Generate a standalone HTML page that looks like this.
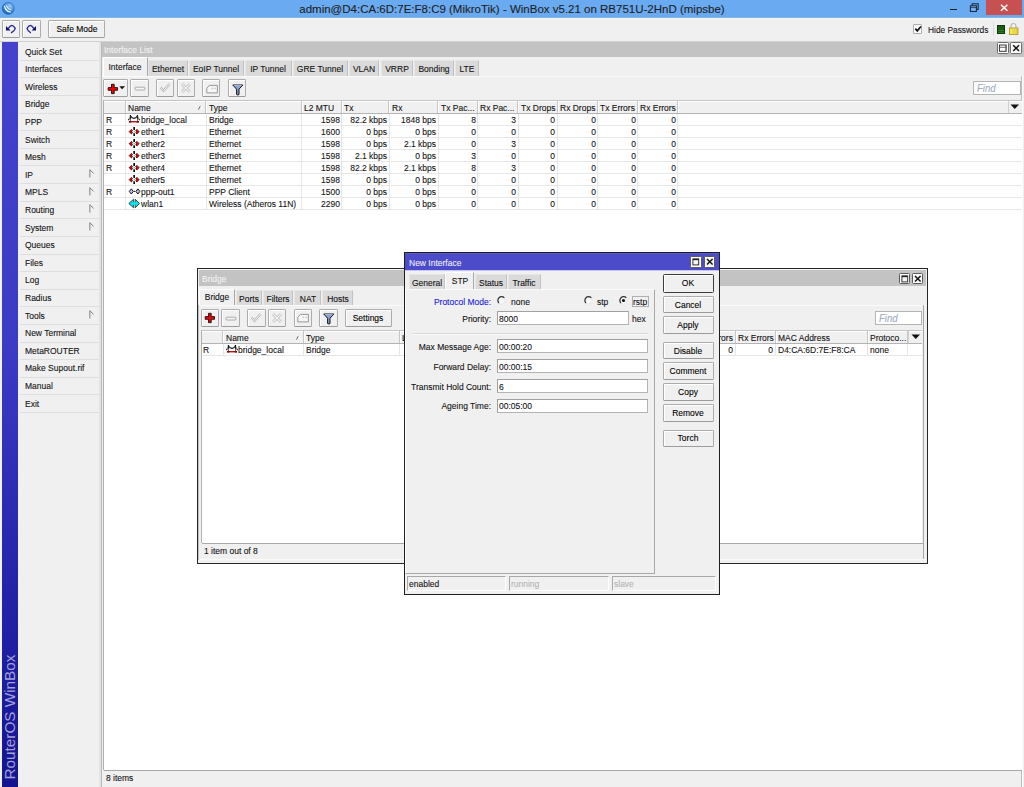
<!DOCTYPE html><html><head><meta charset="utf-8"><style>
*{margin:0;padding:0}
html,body{width:1024px;height:787px;overflow:hidden;background:#f0f0f0;position:relative;font-family:"Liberation Sans",sans-serif;}
div{position:absolute;box-sizing:border-box}
.t{height:20px;line-height:20px;white-space:nowrap;font-size:8.5px;-webkit-text-stroke:0.1px currentColor}
svg{position:absolute;overflow:visible}
</style></head><body>
<div style="left:0.00px;top:0.00px;width:1024.00px;height:17.00px;background:#6aaaf0"></div>
<div style="left:0.00px;top:17.00px;width:1024.00px;height:1.00px;background:#7fb4ea"></div>
<div style="left:0.00px;top:18.00px;width:1024.00px;height:1.00px;background:#f6f6f6"></div>
<svg style="left:0px;top:0px" width="18" height="18"><defs><radialGradient id="lg" cx="62%" cy="30%" r="75%"><stop offset="0" stop-color="#9ccaf8"/><stop offset="0.45" stop-color="#5a9ce8"/><stop offset="1" stop-color="#0a56b4"/></radialGradient></defs>
<circle cx="8.24" cy="8.47" r="5.9" fill="url(#lg)" stroke="#2c6cbc" stroke-width="0.9"/>
<path d="M4.4 5.9 Q5.4 11.4 10.8 12.3" stroke="#fff" stroke-width="1.1" fill="none"/>
<path d="M6.3 5.4 Q7.4 9.4 11.3 9.8" stroke="#f4f8ff" stroke-width="0.9" fill="none"/>
</svg>
<div class="t" style="left:212.00px;top:-1.00px;width:600px;text-align:center;font-size:11.50px;color:#1e1e1e;transform:scaleX(1.0000);transform-origin:50% 50%;">admin@D4:CA:6D:7E:F8:C9 (MikroTik) - WinBox v5.21 on RB751U-2HnD (mipsbe)</div>
<div style="left:950.20px;top:8.80px;width:6.80px;height:1.30px;background:#1a1a1a"></div>
<svg style="left:968px;top:2px" width="14" height="12"><rect x="4.2" y="1.8" width="6" height="5.6" fill="none" stroke="#1a2a40" stroke-width="1.1"/><rect x="2.4" y="3.8" width="6" height="5.6" fill="#7ab8f4" stroke="#1a2a40" stroke-width="1.1"/><path d="M2.6 5.6 H8.2" stroke="#1a2a40" stroke-width="0.8"/></svg>
<div style="left:986.00px;top:0.00px;width:35.50px;height:15.00px;background:#c75050"></div>
<svg style="left:998px;top:2px" width="12" height="12"><path d="M3 2.8 L9.4 8.8 M9.4 2.8 L3 8.8" stroke="#fff" stroke-width="1.5"/></svg>
<div style="left:1.50px;top:20.30px;width:18.20px;height:17.70px;border:1px solid #acacac;border-bottom-color:#9c9c9c;border-radius:1.5px;background:#f0f0f0;box-shadow:inset 1px 1px 0 #fff;box-sizing:border-box;"></div>
<svg style="left:1px;top:20px" width="20" height="18"><path d="M7.6 8.2 Q9.4 5.3 10.9 5.3 Q12.6 5.5 14.3 8.4 Q13.8 10.6 10.4 12.6" stroke="#202090" stroke-width="1.25" fill="none" stroke-linejoin="round" stroke-linecap="round"/><path d="M5 6 L5 10.6 L9.6 10.6 Z" fill="#101070"/></svg>
<div style="left:22.20px;top:20.30px;width:18.50px;height:17.70px;border:1px solid #acacac;border-bottom-color:#9c9c9c;border-radius:1.5px;background:#f0f0f0;box-shadow:inset 1px 1px 0 #fff;box-sizing:border-box;"></div>
<svg style="left:22px;top:20px" width="20" height="18"><path d="M11.6 8.2 Q9.8 5.3 8.3 5.3 Q6.6 5.5 5 8.6 Q5.6 10.4 8.4 12.6" stroke="#202090" stroke-width="1.25" fill="none" stroke-linejoin="round" stroke-linecap="round"/><path d="M14 6 L14 10.6 L9.6 10.6 Z" fill="#101070"/></svg>
<div style="left:48.30px;top:20.30px;width:56.50px;height:17.70px;border:1px solid #acacac;border-bottom-color:#9c9c9c;border-radius:1.5px;background:#f0f0f0;box-shadow:inset 1px 1px 0 #fff;box-sizing:border-box;"></div>
<div class="t" style="left:-223.45px;top:19.15px;width:600px;text-align:center;font-size:9.44px;color:#000;transform:scaleX(0.9009);transform-origin:50% 50%;">Safe Mode</div>
<div style="left:913.00px;top:24.00px;width:9.30px;height:9.80px;border:1px solid #acacac;border-radius:1px;background:#fff"></div>
<svg style="left:913px;top:24px" width="10" height="10"><path d="M2.3 4.6 L4.3 6.9 L7.9 2.5" stroke="#111" stroke-width="1.7" fill="none"/></svg>
<div class="t" style="left:927.50px;top:19.90px;font-size:9.27px;color:#111;transform:scaleX(0.9009);transform-origin:0 50%;">Hide Passwords</div>
<div style="left:993.00px;top:22.00px;width:1.00px;height:14.00px;background:#dcdcdc"></div>
<div style="left:996.90px;top:24.70px;width:7.90px;height:9.40px;background:repeating-linear-gradient(#1c5c12 0 1.6px,#2e7a20 1.6px 2.3px);border:0.8px solid #0a3a0a"></div>
<svg style="left:1008px;top:22px" width="12" height="14"><path d="M3 6 V4.5 Q3 1.5 5.5 1.5 Q8 1.5 8 4.5 V6" stroke="#b8b8b8" stroke-width="1.2" fill="none"/><rect x="1.5" y="6" width="8.5" height="6.5" fill="#f6ea5a" stroke="#a89020" stroke-width="0.8"/><path d="M5 7 V11.8 M7 7 V11.8 M8.6 7 V11.8" stroke="#d8b830" stroke-width="0.7"/></svg>
<div style="left:0.00px;top:40.90px;width:1024.00px;height:1.00px;background:#d2d2d2"></div>
<div style="left:2.00px;top:42.00px;width:15.50px;height:745.00px;background:linear-gradient(#4343cc,#3b3bc4 40%,#1c1ca0 85%,#141490)"></div>
<div class="t" style="left:10px;top:716.8px;width:0;height:0;"><div style="left:0;top:0;transform:translate(-50%,-50%) rotate(-90deg);font-size:15.3px;color:#a2a2d2;-webkit-text-stroke:0;white-space:nowrap;line-height:16px;height:16px;">RouterOS WinBox</div></div>
<div class="t" style="left:25.00px;top:41.50px;font-size:9.44px;color:#111;transform:scaleX(0.9009);transform-origin:0 50%;">Quick Set</div>
<div style="left:19.50px;top:59.81px;width:79.50px;height:1.00px;background:#dedede"></div>
<div class="t" style="left:25.00px;top:59.11px;font-size:9.44px;color:#111;transform:scaleX(0.9009);transform-origin:0 50%;">Interfaces</div>
<div style="left:19.50px;top:77.42px;width:79.50px;height:1.00px;background:#dedede"></div>
<div class="t" style="left:25.00px;top:76.73px;font-size:9.44px;color:#111;transform:scaleX(0.9009);transform-origin:0 50%;">Wireless</div>
<div style="left:19.50px;top:95.03px;width:79.50px;height:1.00px;background:#dedede"></div>
<div class="t" style="left:25.00px;top:94.33px;font-size:9.44px;color:#111;transform:scaleX(0.9009);transform-origin:0 50%;">Bridge</div>
<div style="left:19.50px;top:112.64px;width:79.50px;height:1.00px;background:#dedede"></div>
<div class="t" style="left:25.00px;top:111.95px;font-size:9.44px;color:#111;transform:scaleX(0.9009);transform-origin:0 50%;">PPP</div>
<div style="left:19.50px;top:130.25px;width:79.50px;height:1.00px;background:#dedede"></div>
<div class="t" style="left:25.00px;top:129.56px;font-size:9.44px;color:#111;transform:scaleX(0.9009);transform-origin:0 50%;">Switch</div>
<div style="left:19.50px;top:147.86px;width:79.50px;height:1.00px;background:#dedede"></div>
<div class="t" style="left:25.00px;top:147.17px;font-size:9.44px;color:#111;transform:scaleX(0.9009);transform-origin:0 50%;">Mesh</div>
<div style="left:19.50px;top:165.47px;width:79.50px;height:1.00px;background:#dedede"></div>
<div class="t" style="left:25.00px;top:164.78px;font-size:9.44px;color:#111;transform:scaleX(0.9009);transform-origin:0 50%;">IP</div>
<div style="left:19.50px;top:183.08px;width:79.50px;height:1.00px;background:#dedede"></div>
<svg style="left:88px;top:169.17px" width="8" height="10"><path d="M1.8 0.4 V8.5" stroke="#9a9a9a" stroke-width="1.3"/><path d="M1.9 0.9 L5.6 4.3" stroke="#808080" stroke-width="1"/></svg>
<div class="t" style="left:25.00px;top:182.39px;font-size:9.44px;color:#111;transform:scaleX(0.9009);transform-origin:0 50%;">MPLS</div>
<div style="left:19.50px;top:200.69px;width:79.50px;height:1.00px;background:#dedede"></div>
<svg style="left:88px;top:186.78px" width="8" height="10"><path d="M1.8 0.4 V8.5" stroke="#9a9a9a" stroke-width="1.3"/><path d="M1.9 0.9 L5.6 4.3" stroke="#808080" stroke-width="1"/></svg>
<div class="t" style="left:25.00px;top:200.00px;font-size:9.44px;color:#111;transform:scaleX(0.9009);transform-origin:0 50%;">Routing</div>
<div style="left:19.50px;top:218.30px;width:79.50px;height:1.00px;background:#dedede"></div>
<svg style="left:88px;top:204.39px" width="8" height="10"><path d="M1.8 0.4 V8.5" stroke="#9a9a9a" stroke-width="1.3"/><path d="M1.9 0.9 L5.6 4.3" stroke="#808080" stroke-width="1"/></svg>
<div class="t" style="left:25.00px;top:217.61px;font-size:9.44px;color:#111;transform:scaleX(0.9009);transform-origin:0 50%;">System</div>
<div style="left:19.50px;top:235.91px;width:79.50px;height:1.00px;background:#dedede"></div>
<svg style="left:88px;top:222.00px" width="8" height="10"><path d="M1.8 0.4 V8.5" stroke="#9a9a9a" stroke-width="1.3"/><path d="M1.9 0.9 L5.6 4.3" stroke="#808080" stroke-width="1"/></svg>
<div class="t" style="left:25.00px;top:235.22px;font-size:9.44px;color:#111;transform:scaleX(0.9009);transform-origin:0 50%;">Queues</div>
<div style="left:19.50px;top:253.52px;width:79.50px;height:1.00px;background:#dedede"></div>
<div class="t" style="left:25.00px;top:252.82px;font-size:9.44px;color:#111;transform:scaleX(0.9009);transform-origin:0 50%;">Files</div>
<div style="left:19.50px;top:271.13px;width:79.50px;height:1.00px;background:#dedede"></div>
<div class="t" style="left:25.00px;top:270.44px;font-size:9.44px;color:#111;transform:scaleX(0.9009);transform-origin:0 50%;">Log</div>
<div style="left:19.50px;top:288.74px;width:79.50px;height:1.00px;background:#dedede"></div>
<div class="t" style="left:25.00px;top:288.05px;font-size:9.44px;color:#111;transform:scaleX(0.9009);transform-origin:0 50%;">Radius</div>
<div style="left:19.50px;top:306.35px;width:79.50px;height:1.00px;background:#dedede"></div>
<div class="t" style="left:25.00px;top:305.65px;font-size:9.44px;color:#111;transform:scaleX(0.9009);transform-origin:0 50%;">Tools</div>
<div style="left:19.50px;top:323.96px;width:79.50px;height:1.00px;background:#dedede"></div>
<svg style="left:88px;top:310.05px" width="8" height="10"><path d="M1.8 0.4 V8.5" stroke="#9a9a9a" stroke-width="1.3"/><path d="M1.9 0.9 L5.6 4.3" stroke="#808080" stroke-width="1"/></svg>
<div class="t" style="left:25.00px;top:323.26px;font-size:9.44px;color:#111;transform:scaleX(0.9009);transform-origin:0 50%;">New Terminal</div>
<div style="left:19.50px;top:341.57px;width:79.50px;height:1.00px;background:#dedede"></div>
<div class="t" style="left:25.00px;top:340.88px;font-size:9.44px;color:#111;transform:scaleX(0.9009);transform-origin:0 50%;">MetaROUTER</div>
<div style="left:19.50px;top:359.18px;width:79.50px;height:1.00px;background:#dedede"></div>
<div class="t" style="left:25.00px;top:358.49px;font-size:9.44px;color:#111;transform:scaleX(0.9009);transform-origin:0 50%;">Make Supout.rif</div>
<div style="left:19.50px;top:376.79px;width:79.50px;height:1.00px;background:#dedede"></div>
<div class="t" style="left:25.00px;top:376.09px;font-size:9.44px;color:#111;transform:scaleX(0.9009);transform-origin:0 50%;">Manual</div>
<div style="left:19.50px;top:394.40px;width:79.50px;height:1.00px;background:#dedede"></div>
<div class="t" style="left:25.00px;top:393.70px;font-size:9.44px;color:#111;transform:scaleX(0.9009);transform-origin:0 50%;">Exit</div>
<div style="left:19.50px;top:412.01px;width:79.50px;height:1.00px;background:#dedede"></div>
<div style="left:99.00px;top:42.00px;width:2.50px;height:745.00px;background:#e4e4e4"></div>
<div style="left:101.20px;top:42.00px;width:1.00px;height:745.00px;background:#b8b8b8"></div>
<div style="left:101.50px;top:41.90px;width:922.50px;height:14.70px;background:#c3c3c3"></div>
<div class="t" style="left:104.00px;top:39.80px;font-size:9.44px;color:#f2f2f2;transform:scaleX(0.9009);transform-origin:0 50%;">Interface List</div>
<div style="left:997.00px;top:42.30px;width:11.70px;height:12.20px;border:1px solid #6a6a6a;border-radius:1.5px;background:#f4f4f4;box-shadow:inset 0 0 0 1px #fff"></div>
<svg style="left:997.00px;top:42.30px" width="12" height="12"><rect x="2.5" y="3" width="6.6" height="6.3" fill="#fafafa" stroke="#2a2a2a" stroke-width="0.9"/><path d="M2.5 5.3 H9.1" stroke="#444" stroke-width="0.8"/><path d="M8.9 3.2 V9.2" stroke="#666" stroke-width="0.8"/></svg>
<div style="left:1010.00px;top:42.30px;width:12.20px;height:12.20px;border:1px solid #6a6a6a;border-radius:1.5px;background:#f4f4f4;box-shadow:inset 0 0 0 1px #fff"></div>
<svg style="left:1010.00px;top:42.30px" width="12" height="12"><path d="M3.2 3.2 L9 9 M9 3.2 L3.2 9" stroke="#111" stroke-width="1.5"/></svg>
<div style="left:102.50px;top:57.20px;width:45.00px;height:19.30px;background:#f0f0f0;border-left:1px solid #fff;border-top:1px solid #fff;border-right:1px solid #a8a8a8;"></div>
<div class="t" style="left:-175.00px;top:56.80px;width:600px;text-align:center;font-size:9.44px;color:#111;transform:scaleX(0.9009);transform-origin:50% 50%;">Interface</div>
<div style="left:147.50px;top:60.20px;width:40.00px;height:15.80px;background:#dadada;border-right:1px solid #c2c2c2;border-top:1px solid #e6e6e6;border-left:1px solid #e6e6e6"></div>
<div class="t" style="left:-132.50px;top:59.10px;width:600px;text-align:center;font-size:9.44px;color:#111;transform:scaleX(0.9009);transform-origin:50% 50%;">Ethernet</div>
<div style="left:188.50px;top:60.20px;width:55.90px;height:15.80px;background:#dadada;border-right:1px solid #c2c2c2;border-top:1px solid #e6e6e6;border-left:1px solid #e6e6e6"></div>
<div class="t" style="left:-83.55px;top:59.10px;width:600px;text-align:center;font-size:9.44px;color:#111;transform:scaleX(0.9009);transform-origin:50% 50%;">EoIP Tunnel</div>
<div style="left:245.00px;top:60.20px;width:46.50px;height:15.80px;background:#dadada;border-right:1px solid #c2c2c2;border-top:1px solid #e6e6e6;border-left:1px solid #e6e6e6"></div>
<div class="t" style="left:-31.75px;top:59.10px;width:600px;text-align:center;font-size:9.44px;color:#111;transform:scaleX(0.9009);transform-origin:50% 50%;">IP Tunnel</div>
<div style="left:292.70px;top:60.20px;width:55.00px;height:15.80px;background:#dadada;border-right:1px solid #c2c2c2;border-top:1px solid #e6e6e6;border-left:1px solid #e6e6e6"></div>
<div class="t" style="left:20.20px;top:59.10px;width:600px;text-align:center;font-size:9.44px;color:#111;transform:scaleX(0.9009);transform-origin:50% 50%;">GRE Tunnel</div>
<div style="left:348.70px;top:60.20px;width:30.80px;height:15.80px;background:#dadada;border-right:1px solid #c2c2c2;border-top:1px solid #e6e6e6;border-left:1px solid #e6e6e6"></div>
<div class="t" style="left:64.10px;top:59.10px;width:600px;text-align:center;font-size:9.44px;color:#111;transform:scaleX(0.9009);transform-origin:50% 50%;">VLAN</div>
<div style="left:380.50px;top:60.20px;width:32.80px;height:15.80px;background:#dadada;border-right:1px solid #c2c2c2;border-top:1px solid #e6e6e6;border-left:1px solid #e6e6e6"></div>
<div class="t" style="left:96.90px;top:59.10px;width:600px;text-align:center;font-size:9.44px;color:#111;transform:scaleX(0.9009);transform-origin:50% 50%;">VRRP</div>
<div style="left:414.30px;top:60.20px;width:39.60px;height:15.80px;background:#dadada;border-right:1px solid #c2c2c2;border-top:1px solid #e6e6e6;border-left:1px solid #e6e6e6"></div>
<div class="t" style="left:134.10px;top:59.10px;width:600px;text-align:center;font-size:9.44px;color:#111;transform:scaleX(0.9009);transform-origin:50% 50%;">Bonding</div>
<div style="left:455.00px;top:60.20px;width:24.30px;height:15.80px;background:#dadada;border-right:1px solid #c2c2c2;border-top:1px solid #e6e6e6;border-left:1px solid #e6e6e6"></div>
<div class="t" style="left:167.15px;top:59.10px;width:600px;text-align:center;font-size:9.44px;color:#111;transform:scaleX(0.9009);transform-origin:50% 50%;">LTE</div>
<div style="left:102.20px;top:75.50px;width:921.80px;height:1.00px;background:#fafafa"></div>
<div style="left:1021.20px;top:76.00px;width:1.20px;height:711.00px;background:#bcbcbc"></div>
<div style="left:1022.40px;top:76.00px;width:1.00px;height:711.00px;background:#fcfcfc"></div>
<div style="left:103.10px;top:79.10px;width:24.60px;height:18.15px;border:1px solid #acacac;border-bottom-color:#9c9c9c;border-radius:1.5px;background:#f0f0f0;box-shadow:inset 1px 1px 0 #fff;box-sizing:border-box;"></div>
<svg style="left:107.20px;top:82.50px" width="12" height="12"><path d="M4.5 1.3 H7.2 V4.6 H10.5 V7.3 H7.2 V10.6 H4.5 V7.3 H1.2 V4.6 H4.5 Z" fill="#f00000" stroke="#111" stroke-width="0.9"/></svg>
<svg style="left:119px;top:86px" width="7" height="4"><path d="M0.3 0.3 H6 L3.15 3.3 Z" fill="#111"/></svg>
<div style="left:130.30px;top:79.10px;width:18.50px;height:18.15px;border:1px solid #acacac;border-bottom-color:#9c9c9c;border-radius:1.5px;background:#f0f0f0;box-shadow:inset 1px 1px 0 #fff;box-sizing:border-box;"></div>
<svg style="left:133.80px;top:84.80px" width="12" height="8"><rect x="1.2" y="2.2" width="9.6" height="2.8" rx="0.3" fill="#f6f6f6" stroke="#a4a4a4" stroke-width="0.9"/></svg>
<div style="left:156.20px;top:79.10px;width:17.60px;height:18.15px;border:1px solid #acacac;border-bottom-color:#9c9c9c;border-radius:1.5px;background:#f0f0f0;box-shadow:inset 1px 1px 0 #fff;box-sizing:border-box;"></div>
<svg style="left:159.00px;top:82.20px" width="12" height="12"><path d="M1.5 5.5 L4.5 8.8 L10.5 2" stroke="#b8b8b8" stroke-width="2.4" fill="none"/><path d="M1.5 5.5 L4.5 8.8 L10.5 2" stroke="#f4f4f4" stroke-width="1" fill="none"/></svg>
<div style="left:177.00px;top:79.10px;width:17.80px;height:18.15px;border:1px solid #acacac;border-bottom-color:#9c9c9c;border-radius:1.5px;background:#f0f0f0;box-shadow:inset 1px 1px 0 #fff;box-sizing:border-box;"></div>
<svg style="left:180.00px;top:82.20px" width="12" height="12"><path d="M2 2 L10 10 M10 2 L2 10" stroke="#b8b8b8" stroke-width="2.6" fill="none"/><path d="M2 2 L10 10 M10 2 L2 10" stroke="#f4f4f4" stroke-width="1.1" fill="none"/></svg>
<div style="left:202.40px;top:79.10px;width:18.00px;height:18.15px;border:1px solid #acacac;border-bottom-color:#9c9c9c;border-radius:1.5px;background:#f0f0f0;box-shadow:inset 1px 1px 0 #fff;box-sizing:border-box;"></div>
<svg style="left:205.50px;top:83.60px" width="12" height="10"><path d="M0.8 4.4 L3.3 1.4 H11.4 V8.9 H0.8 Z" fill="#f6f6f6" stroke="#8c8c8c" stroke-width="0.9" stroke-linejoin="round"/><path d="M5.6 4.3 H6.9 M8.3 4.3 H9.6" stroke="#9a9a9a" stroke-width="0.8"/></svg>
<div style="left:228.20px;top:79.10px;width:17.70px;height:18.15px;border:1px solid #acacac;border-bottom-color:#9c9c9c;border-radius:1.5px;background:#f0f0f0;box-shadow:inset 1px 1px 0 #fff;box-sizing:border-box;"></div>
<svg style="left:232.00px;top:83.60px" width="12" height="12"><path d="M0.8 1 H10.8 L7 5.2 V10.5 Q5.8 11.5 4.6 10.5 V5.2 Z" fill="#8aa0d8" stroke="#111" stroke-width="1"/><path d="M1.8 1.6 H9.8" stroke="#c8d4f0" stroke-width="0.8"/></svg>
<div style="left:973.00px;top:81.00px;width:47.70px;height:14.00px;background:#fff;border:1px solid #b4b4b4"></div>
<div class="t" style="left:977.00px;top:78.20px;font-size:10.66px;color:#a0acc4;transform:scaleX(0.9009);transform-origin:0 50%;font-style:italic">Find</div>
<div style="left:103.00px;top:100.20px;width:1.00px;height:669.80px;background:#b0b0b0"></div>
<div style="left:104.00px;top:100.20px;width:917.80px;height:13.60px;background:#f0f0f0;border-top:1px solid #c4c4c4;border-bottom:1px solid #b4b4b4;box-shadow:inset 0 1px 0 #fff"></div>
<div style="left:124.80px;top:101.20px;width:1.00px;height:11.60px;background:#c6c6c6"></div>
<div style="left:125.80px;top:101.20px;width:1.00px;height:11.60px;background:#fff"></div>
<div style="left:205.00px;top:101.20px;width:1.00px;height:11.60px;background:#c6c6c6"></div>
<div style="left:206.00px;top:101.20px;width:1.00px;height:11.60px;background:#fff"></div>
<div class="t" style="left:128.30px;top:98.10px;font-size:9.44px;color:#111;transform:scaleX(0.9009);transform-origin:0 50%;">Name</div>
<div style="left:300.60px;top:101.20px;width:1.00px;height:11.60px;background:#c6c6c6"></div>
<div style="left:301.60px;top:101.20px;width:1.00px;height:11.60px;background:#fff"></div>
<div class="t" style="left:208.50px;top:98.10px;font-size:9.44px;color:#111;transform:scaleX(0.9009);transform-origin:0 50%;">Type</div>
<div style="left:340.80px;top:101.20px;width:1.00px;height:11.60px;background:#c6c6c6"></div>
<div style="left:341.80px;top:101.20px;width:1.00px;height:11.60px;background:#fff"></div>
<div class="t" style="left:304.10px;top:98.10px;font-size:9.44px;color:#111;transform:scaleX(0.9009);transform-origin:0 50%;">L2 MTU</div>
<div style="left:388.40px;top:101.20px;width:1.00px;height:11.60px;background:#c6c6c6"></div>
<div style="left:389.40px;top:101.20px;width:1.00px;height:11.60px;background:#fff"></div>
<div class="t" style="left:344.30px;top:98.10px;font-size:9.44px;color:#111;transform:scaleX(0.9009);transform-origin:0 50%;">Tx</div>
<div style="left:437.00px;top:101.20px;width:1.00px;height:11.60px;background:#c6c6c6"></div>
<div style="left:438.00px;top:101.20px;width:1.00px;height:11.60px;background:#fff"></div>
<div class="t" style="left:391.90px;top:98.10px;font-size:9.44px;color:#111;transform:scaleX(0.9009);transform-origin:0 50%;">Rx</div>
<div style="left:476.80px;top:101.20px;width:1.00px;height:11.60px;background:#c6c6c6"></div>
<div style="left:477.80px;top:101.20px;width:1.00px;height:11.60px;background:#fff"></div>
<div class="t" style="left:440.50px;top:98.10px;font-size:9.44px;color:#111;transform:scaleX(0.9009);transform-origin:0 50%;">Tx Pac...</div>
<div style="left:517.00px;top:101.20px;width:1.00px;height:11.60px;background:#c6c6c6"></div>
<div style="left:518.00px;top:101.20px;width:1.00px;height:11.60px;background:#fff"></div>
<div class="t" style="left:480.30px;top:98.10px;font-size:9.44px;color:#111;transform:scaleX(0.9009);transform-origin:0 50%;">Rx Pac...</div>
<div style="left:556.50px;top:101.20px;width:1.00px;height:11.60px;background:#c6c6c6"></div>
<div style="left:557.50px;top:101.20px;width:1.00px;height:11.60px;background:#fff"></div>
<div class="t" style="left:520.50px;top:98.10px;font-size:9.44px;color:#111;transform:scaleX(0.9009);transform-origin:0 50%;">Tx Drops</div>
<div style="left:596.80px;top:101.20px;width:1.00px;height:11.60px;background:#c6c6c6"></div>
<div style="left:597.80px;top:101.20px;width:1.00px;height:11.60px;background:#fff"></div>
<div class="t" style="left:560.00px;top:98.10px;font-size:9.44px;color:#111;transform:scaleX(0.9009);transform-origin:0 50%;">Rx Drops</div>
<div style="left:636.80px;top:101.20px;width:1.00px;height:11.60px;background:#c6c6c6"></div>
<div style="left:637.80px;top:101.20px;width:1.00px;height:11.60px;background:#fff"></div>
<div class="t" style="left:600.30px;top:98.10px;font-size:9.44px;color:#111;transform:scaleX(0.9009);transform-origin:0 50%;">Tx Errors</div>
<div style="left:676.80px;top:101.20px;width:1.00px;height:11.60px;background:#c6c6c6"></div>
<div style="left:677.80px;top:101.20px;width:1.00px;height:11.60px;background:#fff"></div>
<div class="t" style="left:640.30px;top:98.10px;font-size:9.44px;color:#111;transform:scaleX(0.9009);transform-origin:0 50%;">Rx Errors</div>
<div style="left:104.00px;top:113.80px;width:917.80px;height:656.20px;background:#fff"></div>
<div style="left:104.00px;top:124.80px;width:917.80px;height:1.00px;background:#e6e6e6"></div>
<div class="t" style="left:105.60px;top:109.80px;font-size:9.44px;color:#111;transform:scaleX(0.9009);transform-origin:0 50%;">R</div>
<svg style="left:128.00px;top:114.80px" width="13" height="10"><path d="M1.3 6.7 H10.7" stroke="#b01818" stroke-width="1.4"/><path d="M1 6.7 H3.4 M8.6 6.7 H11" stroke="#880000" stroke-width="1.6"/><path d="M2.45 3 V6.2 M9.5 3 V6.2" stroke="#555" stroke-width="0.9"/><path d="M2.45 0.1 V3.6 M9.5 0.1 V3.6" stroke="#000" stroke-width="1.2"/><path d="M2.45 1 Q6 5.6 9.5 1" stroke="#1a1a1a" stroke-width="1.2" fill="none"/><path d="M2.45 1.4 L0.7 4.6 M9.5 1.4 L11.3 4.6" stroke="#444" stroke-width="0.7"/><circle cx="0.7" cy="4.6" r="0.8" fill="#333"/><circle cx="11.3" cy="4.6" r="0.8" fill="#333"/></svg>
<div class="t" style="left:140.50px;top:109.80px;font-size:9.44px;color:#111;transform:scaleX(0.9009);transform-origin:0 50%;">bridge_local</div>
<div class="t" style="left:208.50px;top:109.80px;font-size:9.44px;color:#111;transform:scaleX(0.9009);transform-origin:0 50%;">Bridge</div>
<div class="t" style="left:39.60px;top:109.80px;width:300px;text-align:right;font-size:9.44px;color:#111;transform:scaleX(0.9009);transform-origin:100% 50%;">1598</div>
<div class="t" style="left:87.20px;top:109.80px;width:300px;text-align:right;font-size:9.44px;color:#111;transform:scaleX(0.9009);transform-origin:100% 50%;">82.2 kbps</div>
<div class="t" style="left:135.80px;top:109.80px;width:300px;text-align:right;font-size:9.44px;color:#111;transform:scaleX(0.9009);transform-origin:100% 50%;">1848 bps</div>
<div class="t" style="left:175.60px;top:109.80px;width:300px;text-align:right;font-size:9.44px;color:#111;transform:scaleX(0.9009);transform-origin:100% 50%;">8</div>
<div class="t" style="left:215.80px;top:109.80px;width:300px;text-align:right;font-size:9.44px;color:#111;transform:scaleX(0.9009);transform-origin:100% 50%;">3</div>
<div class="t" style="left:255.30px;top:109.80px;width:300px;text-align:right;font-size:9.44px;color:#111;transform:scaleX(0.9009);transform-origin:100% 50%;">0</div>
<div class="t" style="left:295.60px;top:109.80px;width:300px;text-align:right;font-size:9.44px;color:#111;transform:scaleX(0.9009);transform-origin:100% 50%;">0</div>
<div class="t" style="left:335.60px;top:109.80px;width:300px;text-align:right;font-size:9.44px;color:#111;transform:scaleX(0.9009);transform-origin:100% 50%;">0</div>
<div class="t" style="left:375.60px;top:109.80px;width:300px;text-align:right;font-size:9.44px;color:#111;transform:scaleX(0.9009);transform-origin:100% 50%;">0</div>
<div style="left:104.00px;top:136.80px;width:917.80px;height:1.00px;background:#e6e6e6"></div>
<div class="t" style="left:105.60px;top:121.80px;font-size:9.44px;color:#111;transform:scaleX(0.9009);transform-origin:0 50%;">R</div>
<svg style="left:128.00px;top:126.80px" width="13" height="11"><path d="M1.2 4.65 L3.4 2.4 L4.5 3.5 L3.7 4.65 L4.5 5.8 L3.4 6.9 Z" fill="#ee0000" stroke="#200" stroke-width="0.8"/><path d="M11.1 4.65 L8.9 2.4 L7.8 3.5 L8.6 4.65 L7.8 5.8 L8.9 6.9 Z" fill="#ee0000" stroke="#200" stroke-width="0.8"/><path d="M6.15 0.1 V3 M6.15 6.3 V9" stroke="#000" stroke-width="1.6"/><circle cx="6.15" cy="4.65" r="0.6" fill="#666"/></svg>
<div class="t" style="left:140.50px;top:121.80px;font-size:9.44px;color:#111;transform:scaleX(0.9009);transform-origin:0 50%;">ether1</div>
<div class="t" style="left:208.50px;top:121.80px;font-size:9.44px;color:#111;transform:scaleX(0.9009);transform-origin:0 50%;">Ethernet</div>
<div class="t" style="left:39.60px;top:121.80px;width:300px;text-align:right;font-size:9.44px;color:#111;transform:scaleX(0.9009);transform-origin:100% 50%;">1600</div>
<div class="t" style="left:87.20px;top:121.80px;width:300px;text-align:right;font-size:9.44px;color:#111;transform:scaleX(0.9009);transform-origin:100% 50%;">0 bps</div>
<div class="t" style="left:135.80px;top:121.80px;width:300px;text-align:right;font-size:9.44px;color:#111;transform:scaleX(0.9009);transform-origin:100% 50%;">0 bps</div>
<div class="t" style="left:175.60px;top:121.80px;width:300px;text-align:right;font-size:9.44px;color:#111;transform:scaleX(0.9009);transform-origin:100% 50%;">0</div>
<div class="t" style="left:215.80px;top:121.80px;width:300px;text-align:right;font-size:9.44px;color:#111;transform:scaleX(0.9009);transform-origin:100% 50%;">0</div>
<div class="t" style="left:255.30px;top:121.80px;width:300px;text-align:right;font-size:9.44px;color:#111;transform:scaleX(0.9009);transform-origin:100% 50%;">0</div>
<div class="t" style="left:295.60px;top:121.80px;width:300px;text-align:right;font-size:9.44px;color:#111;transform:scaleX(0.9009);transform-origin:100% 50%;">0</div>
<div class="t" style="left:335.60px;top:121.80px;width:300px;text-align:right;font-size:9.44px;color:#111;transform:scaleX(0.9009);transform-origin:100% 50%;">0</div>
<div class="t" style="left:375.60px;top:121.80px;width:300px;text-align:right;font-size:9.44px;color:#111;transform:scaleX(0.9009);transform-origin:100% 50%;">0</div>
<div style="left:104.00px;top:148.80px;width:917.80px;height:1.00px;background:#e6e6e6"></div>
<div class="t" style="left:105.60px;top:133.80px;font-size:9.44px;color:#111;transform:scaleX(0.9009);transform-origin:0 50%;">R</div>
<svg style="left:128.00px;top:138.80px" width="13" height="11"><path d="M1.2 4.65 L3.4 2.4 L4.5 3.5 L3.7 4.65 L4.5 5.8 L3.4 6.9 Z" fill="#ee0000" stroke="#200" stroke-width="0.8"/><path d="M11.1 4.65 L8.9 2.4 L7.8 3.5 L8.6 4.65 L7.8 5.8 L8.9 6.9 Z" fill="#ee0000" stroke="#200" stroke-width="0.8"/><path d="M6.15 0.1 V3 M6.15 6.3 V9" stroke="#000" stroke-width="1.6"/><circle cx="6.15" cy="4.65" r="0.6" fill="#666"/></svg>
<div class="t" style="left:140.50px;top:133.80px;font-size:9.44px;color:#111;transform:scaleX(0.9009);transform-origin:0 50%;">ether2</div>
<div class="t" style="left:208.50px;top:133.80px;font-size:9.44px;color:#111;transform:scaleX(0.9009);transform-origin:0 50%;">Ethernet</div>
<div class="t" style="left:39.60px;top:133.80px;width:300px;text-align:right;font-size:9.44px;color:#111;transform:scaleX(0.9009);transform-origin:100% 50%;">1598</div>
<div class="t" style="left:87.20px;top:133.80px;width:300px;text-align:right;font-size:9.44px;color:#111;transform:scaleX(0.9009);transform-origin:100% 50%;">0 bps</div>
<div class="t" style="left:135.80px;top:133.80px;width:300px;text-align:right;font-size:9.44px;color:#111;transform:scaleX(0.9009);transform-origin:100% 50%;">2.1 kbps</div>
<div class="t" style="left:175.60px;top:133.80px;width:300px;text-align:right;font-size:9.44px;color:#111;transform:scaleX(0.9009);transform-origin:100% 50%;">0</div>
<div class="t" style="left:215.80px;top:133.80px;width:300px;text-align:right;font-size:9.44px;color:#111;transform:scaleX(0.9009);transform-origin:100% 50%;">3</div>
<div class="t" style="left:255.30px;top:133.80px;width:300px;text-align:right;font-size:9.44px;color:#111;transform:scaleX(0.9009);transform-origin:100% 50%;">0</div>
<div class="t" style="left:295.60px;top:133.80px;width:300px;text-align:right;font-size:9.44px;color:#111;transform:scaleX(0.9009);transform-origin:100% 50%;">0</div>
<div class="t" style="left:335.60px;top:133.80px;width:300px;text-align:right;font-size:9.44px;color:#111;transform:scaleX(0.9009);transform-origin:100% 50%;">0</div>
<div class="t" style="left:375.60px;top:133.80px;width:300px;text-align:right;font-size:9.44px;color:#111;transform:scaleX(0.9009);transform-origin:100% 50%;">0</div>
<div style="left:104.00px;top:160.80px;width:917.80px;height:1.00px;background:#e6e6e6"></div>
<div class="t" style="left:105.60px;top:145.80px;font-size:9.44px;color:#111;transform:scaleX(0.9009);transform-origin:0 50%;">R</div>
<svg style="left:128.00px;top:150.80px" width="13" height="11"><path d="M1.2 4.65 L3.4 2.4 L4.5 3.5 L3.7 4.65 L4.5 5.8 L3.4 6.9 Z" fill="#ee0000" stroke="#200" stroke-width="0.8"/><path d="M11.1 4.65 L8.9 2.4 L7.8 3.5 L8.6 4.65 L7.8 5.8 L8.9 6.9 Z" fill="#ee0000" stroke="#200" stroke-width="0.8"/><path d="M6.15 0.1 V3 M6.15 6.3 V9" stroke="#000" stroke-width="1.6"/><circle cx="6.15" cy="4.65" r="0.6" fill="#666"/></svg>
<div class="t" style="left:140.50px;top:145.80px;font-size:9.44px;color:#111;transform:scaleX(0.9009);transform-origin:0 50%;">ether3</div>
<div class="t" style="left:208.50px;top:145.80px;font-size:9.44px;color:#111;transform:scaleX(0.9009);transform-origin:0 50%;">Ethernet</div>
<div class="t" style="left:39.60px;top:145.80px;width:300px;text-align:right;font-size:9.44px;color:#111;transform:scaleX(0.9009);transform-origin:100% 50%;">1598</div>
<div class="t" style="left:87.20px;top:145.80px;width:300px;text-align:right;font-size:9.44px;color:#111;transform:scaleX(0.9009);transform-origin:100% 50%;">2.1 kbps</div>
<div class="t" style="left:135.80px;top:145.80px;width:300px;text-align:right;font-size:9.44px;color:#111;transform:scaleX(0.9009);transform-origin:100% 50%;">0 bps</div>
<div class="t" style="left:175.60px;top:145.80px;width:300px;text-align:right;font-size:9.44px;color:#111;transform:scaleX(0.9009);transform-origin:100% 50%;">3</div>
<div class="t" style="left:215.80px;top:145.80px;width:300px;text-align:right;font-size:9.44px;color:#111;transform:scaleX(0.9009);transform-origin:100% 50%;">0</div>
<div class="t" style="left:255.30px;top:145.80px;width:300px;text-align:right;font-size:9.44px;color:#111;transform:scaleX(0.9009);transform-origin:100% 50%;">0</div>
<div class="t" style="left:295.60px;top:145.80px;width:300px;text-align:right;font-size:9.44px;color:#111;transform:scaleX(0.9009);transform-origin:100% 50%;">0</div>
<div class="t" style="left:335.60px;top:145.80px;width:300px;text-align:right;font-size:9.44px;color:#111;transform:scaleX(0.9009);transform-origin:100% 50%;">0</div>
<div class="t" style="left:375.60px;top:145.80px;width:300px;text-align:right;font-size:9.44px;color:#111;transform:scaleX(0.9009);transform-origin:100% 50%;">0</div>
<div style="left:104.00px;top:172.80px;width:917.80px;height:1.00px;background:#e6e6e6"></div>
<div class="t" style="left:105.60px;top:157.80px;font-size:9.44px;color:#111;transform:scaleX(0.9009);transform-origin:0 50%;">R</div>
<svg style="left:128.00px;top:162.80px" width="13" height="11"><path d="M1.2 4.65 L3.4 2.4 L4.5 3.5 L3.7 4.65 L4.5 5.8 L3.4 6.9 Z" fill="#ee0000" stroke="#200" stroke-width="0.8"/><path d="M11.1 4.65 L8.9 2.4 L7.8 3.5 L8.6 4.65 L7.8 5.8 L8.9 6.9 Z" fill="#ee0000" stroke="#200" stroke-width="0.8"/><path d="M6.15 0.1 V3 M6.15 6.3 V9" stroke="#000" stroke-width="1.6"/><circle cx="6.15" cy="4.65" r="0.6" fill="#666"/></svg>
<div class="t" style="left:140.50px;top:157.80px;font-size:9.44px;color:#111;transform:scaleX(0.9009);transform-origin:0 50%;">ether4</div>
<div class="t" style="left:208.50px;top:157.80px;font-size:9.44px;color:#111;transform:scaleX(0.9009);transform-origin:0 50%;">Ethernet</div>
<div class="t" style="left:39.60px;top:157.80px;width:300px;text-align:right;font-size:9.44px;color:#111;transform:scaleX(0.9009);transform-origin:100% 50%;">1598</div>
<div class="t" style="left:87.20px;top:157.80px;width:300px;text-align:right;font-size:9.44px;color:#111;transform:scaleX(0.9009);transform-origin:100% 50%;">82.2 kbps</div>
<div class="t" style="left:135.80px;top:157.80px;width:300px;text-align:right;font-size:9.44px;color:#111;transform:scaleX(0.9009);transform-origin:100% 50%;">2.1 kbps</div>
<div class="t" style="left:175.60px;top:157.80px;width:300px;text-align:right;font-size:9.44px;color:#111;transform:scaleX(0.9009);transform-origin:100% 50%;">8</div>
<div class="t" style="left:215.80px;top:157.80px;width:300px;text-align:right;font-size:9.44px;color:#111;transform:scaleX(0.9009);transform-origin:100% 50%;">3</div>
<div class="t" style="left:255.30px;top:157.80px;width:300px;text-align:right;font-size:9.44px;color:#111;transform:scaleX(0.9009);transform-origin:100% 50%;">0</div>
<div class="t" style="left:295.60px;top:157.80px;width:300px;text-align:right;font-size:9.44px;color:#111;transform:scaleX(0.9009);transform-origin:100% 50%;">0</div>
<div class="t" style="left:335.60px;top:157.80px;width:300px;text-align:right;font-size:9.44px;color:#111;transform:scaleX(0.9009);transform-origin:100% 50%;">0</div>
<div class="t" style="left:375.60px;top:157.80px;width:300px;text-align:right;font-size:9.44px;color:#111;transform:scaleX(0.9009);transform-origin:100% 50%;">0</div>
<div style="left:104.00px;top:184.80px;width:917.80px;height:1.00px;background:#e6e6e6"></div>
<svg style="left:128.00px;top:174.80px" width="13" height="11"><path d="M1.2 4.65 L3.4 2.4 L4.5 3.5 L3.7 4.65 L4.5 5.8 L3.4 6.9 Z" fill="#ee0000" stroke="#200" stroke-width="0.8"/><path d="M11.1 4.65 L8.9 2.4 L7.8 3.5 L8.6 4.65 L7.8 5.8 L8.9 6.9 Z" fill="#ee0000" stroke="#200" stroke-width="0.8"/><path d="M6.15 0.1 V3 M6.15 6.3 V9" stroke="#000" stroke-width="1.6"/><circle cx="6.15" cy="4.65" r="0.6" fill="#666"/></svg>
<div class="t" style="left:140.50px;top:169.80px;font-size:9.44px;color:#111;transform:scaleX(0.9009);transform-origin:0 50%;">ether5</div>
<div class="t" style="left:208.50px;top:169.80px;font-size:9.44px;color:#111;transform:scaleX(0.9009);transform-origin:0 50%;">Ethernet</div>
<div class="t" style="left:39.60px;top:169.80px;width:300px;text-align:right;font-size:9.44px;color:#111;transform:scaleX(0.9009);transform-origin:100% 50%;">1598</div>
<div class="t" style="left:87.20px;top:169.80px;width:300px;text-align:right;font-size:9.44px;color:#111;transform:scaleX(0.9009);transform-origin:100% 50%;">0 bps</div>
<div class="t" style="left:135.80px;top:169.80px;width:300px;text-align:right;font-size:9.44px;color:#111;transform:scaleX(0.9009);transform-origin:100% 50%;">0 bps</div>
<div class="t" style="left:175.60px;top:169.80px;width:300px;text-align:right;font-size:9.44px;color:#111;transform:scaleX(0.9009);transform-origin:100% 50%;">0</div>
<div class="t" style="left:215.80px;top:169.80px;width:300px;text-align:right;font-size:9.44px;color:#111;transform:scaleX(0.9009);transform-origin:100% 50%;">0</div>
<div class="t" style="left:255.30px;top:169.80px;width:300px;text-align:right;font-size:9.44px;color:#111;transform:scaleX(0.9009);transform-origin:100% 50%;">0</div>
<div class="t" style="left:295.60px;top:169.80px;width:300px;text-align:right;font-size:9.44px;color:#111;transform:scaleX(0.9009);transform-origin:100% 50%;">0</div>
<div class="t" style="left:335.60px;top:169.80px;width:300px;text-align:right;font-size:9.44px;color:#111;transform:scaleX(0.9009);transform-origin:100% 50%;">0</div>
<div class="t" style="left:375.60px;top:169.80px;width:300px;text-align:right;font-size:9.44px;color:#111;transform:scaleX(0.9009);transform-origin:100% 50%;">0</div>
<div style="left:104.00px;top:196.80px;width:917.80px;height:1.00px;background:#e6e6e6"></div>
<div class="t" style="left:105.60px;top:181.80px;font-size:9.44px;color:#111;transform:scaleX(0.9009);transform-origin:0 50%;">R</div>
<svg style="left:128.00px;top:186.80px" width="13" height="11"><path d="M1.3 4.45 L3.3 1.9 L5.3 4.45 L3.3 7 Z" fill="#c8c0f0" stroke="#111" stroke-width="1"/><path d="M7.9 4.45 L9.9 1.9 L11.9 4.45 L9.9 7 Z" fill="#c8c0f0" stroke="#111" stroke-width="1"/><circle cx="6.4" cy="4.45" r="0.6" fill="#111"/></svg>
<div class="t" style="left:140.50px;top:181.80px;font-size:9.44px;color:#111;transform:scaleX(0.9009);transform-origin:0 50%;">ppp-out1</div>
<div class="t" style="left:208.50px;top:181.80px;font-size:9.44px;color:#111;transform:scaleX(0.9009);transform-origin:0 50%;">PPP Client</div>
<div class="t" style="left:39.60px;top:181.80px;width:300px;text-align:right;font-size:9.44px;color:#111;transform:scaleX(0.9009);transform-origin:100% 50%;">1500</div>
<div class="t" style="left:87.20px;top:181.80px;width:300px;text-align:right;font-size:9.44px;color:#111;transform:scaleX(0.9009);transform-origin:100% 50%;">0 bps</div>
<div class="t" style="left:135.80px;top:181.80px;width:300px;text-align:right;font-size:9.44px;color:#111;transform:scaleX(0.9009);transform-origin:100% 50%;">0 bps</div>
<div class="t" style="left:175.60px;top:181.80px;width:300px;text-align:right;font-size:9.44px;color:#111;transform:scaleX(0.9009);transform-origin:100% 50%;">0</div>
<div class="t" style="left:215.80px;top:181.80px;width:300px;text-align:right;font-size:9.44px;color:#111;transform:scaleX(0.9009);transform-origin:100% 50%;">0</div>
<div class="t" style="left:255.30px;top:181.80px;width:300px;text-align:right;font-size:9.44px;color:#111;transform:scaleX(0.9009);transform-origin:100% 50%;">0</div>
<div class="t" style="left:295.60px;top:181.80px;width:300px;text-align:right;font-size:9.44px;color:#111;transform:scaleX(0.9009);transform-origin:100% 50%;">0</div>
<div class="t" style="left:335.60px;top:181.80px;width:300px;text-align:right;font-size:9.44px;color:#111;transform:scaleX(0.9009);transform-origin:100% 50%;">0</div>
<div class="t" style="left:375.60px;top:181.80px;width:300px;text-align:right;font-size:9.44px;color:#111;transform:scaleX(0.9009);transform-origin:100% 50%;">0</div>
<div style="left:104.00px;top:208.80px;width:917.80px;height:1.00px;background:#e6e6e6"></div>
<svg style="left:128.00px;top:198.80px" width="13" height="11"><path d="M0.8 4.5 L5.6 0.2 V8.8 Z" fill="#00e4ec" stroke="#1a2828" stroke-width="0.8"/><path d="M11.5 4.5 L7.2 0.2 V8.8 Z" fill="#00e4ec" stroke="#1a2828" stroke-width="0.8"/><path d="M4 4.5 H8.8" stroke="#00e4ec" stroke-width="2.6"/></svg>
<div class="t" style="left:140.50px;top:193.80px;font-size:9.44px;color:#111;transform:scaleX(0.9009);transform-origin:0 50%;">wlan1</div>
<div class="t" style="left:208.50px;top:193.80px;font-size:9.44px;color:#111;transform:scaleX(0.9009);transform-origin:0 50%;">Wireless (Atheros 11N)</div>
<div class="t" style="left:39.60px;top:193.80px;width:300px;text-align:right;font-size:9.44px;color:#111;transform:scaleX(0.9009);transform-origin:100% 50%;">2290</div>
<div class="t" style="left:87.20px;top:193.80px;width:300px;text-align:right;font-size:9.44px;color:#111;transform:scaleX(0.9009);transform-origin:100% 50%;">0 bps</div>
<div class="t" style="left:135.80px;top:193.80px;width:300px;text-align:right;font-size:9.44px;color:#111;transform:scaleX(0.9009);transform-origin:100% 50%;">0 bps</div>
<div class="t" style="left:175.60px;top:193.80px;width:300px;text-align:right;font-size:9.44px;color:#111;transform:scaleX(0.9009);transform-origin:100% 50%;">0</div>
<div class="t" style="left:215.80px;top:193.80px;width:300px;text-align:right;font-size:9.44px;color:#111;transform:scaleX(0.9009);transform-origin:100% 50%;">0</div>
<div class="t" style="left:255.30px;top:193.80px;width:300px;text-align:right;font-size:9.44px;color:#111;transform:scaleX(0.9009);transform-origin:100% 50%;">0</div>
<div class="t" style="left:295.60px;top:193.80px;width:300px;text-align:right;font-size:9.44px;color:#111;transform:scaleX(0.9009);transform-origin:100% 50%;">0</div>
<div class="t" style="left:335.60px;top:193.80px;width:300px;text-align:right;font-size:9.44px;color:#111;transform:scaleX(0.9009);transform-origin:100% 50%;">0</div>
<div class="t" style="left:375.60px;top:193.80px;width:300px;text-align:right;font-size:9.44px;color:#111;transform:scaleX(0.9009);transform-origin:100% 50%;">0</div>
<div style="left:125.30px;top:113.80px;width:1.00px;height:96.00px;background:#e6e6e6"></div>
<div style="left:205.50px;top:113.80px;width:1.00px;height:96.00px;background:#e6e6e6"></div>
<div style="left:301.10px;top:113.80px;width:1.00px;height:96.00px;background:#e6e6e6"></div>
<div style="left:341.30px;top:113.80px;width:1.00px;height:96.00px;background:#e6e6e6"></div>
<div style="left:388.90px;top:113.80px;width:1.00px;height:96.00px;background:#e6e6e6"></div>
<div style="left:437.50px;top:113.80px;width:1.00px;height:96.00px;background:#e6e6e6"></div>
<div style="left:477.30px;top:113.80px;width:1.00px;height:96.00px;background:#e6e6e6"></div>
<div style="left:517.50px;top:113.80px;width:1.00px;height:96.00px;background:#e6e6e6"></div>
<div style="left:557.00px;top:113.80px;width:1.00px;height:96.00px;background:#e6e6e6"></div>
<div style="left:597.30px;top:113.80px;width:1.00px;height:96.00px;background:#e6e6e6"></div>
<div style="left:637.30px;top:113.80px;width:1.00px;height:96.00px;background:#e6e6e6"></div>
<div style="left:677.30px;top:113.80px;width:1.00px;height:96.00px;background:#e6e6e6"></div>
<div style="left:1008.40px;top:101.00px;width:1.00px;height:12.00px;background:#d0d0d0"></div>
<svg style="left:1010px;top:104px" width="10" height="6"><path d="M0.5 0.5 H9 L4.75 5 Z" fill="#111"/></svg>
<svg style="left:197px;top:103px" width="7" height="8"><path d="M1.4 6.6 L3.5 2.9" stroke="#6a6a6a" stroke-width="1"/><path d="M3.9 2.9 L5.6 6.4" stroke="#fff" stroke-width="0.9"/></svg>
<div style="left:104.00px;top:769.50px;width:917.80px;height:1.00px;background:#a8a8a8"></div>
<div class="t" style="left:105.50px;top:768.30px;font-size:9.44px;color:#111;transform:scaleX(0.9009);transform-origin:0 50%;">8 items</div>
<div style="left:196.80px;top:268.10px;width:731.00px;height:295.50px;background:#f0f0f0;border:1.2px solid #262626"></div>
<div style="left:198.00px;top:269.30px;width:728.60px;height:1.00px;background:#f6f6f6"></div>
<div style="left:198.60px;top:270.30px;width:727.60px;height:15.40px;background:#c3c3c3"></div>
<div class="t" style="left:201.50px;top:269.10px;font-size:9.44px;color:#f2f2f2;transform:scaleX(0.9009);transform-origin:0 50%;">Bridge</div>
<div style="left:898.70px;top:272.50px;width:11.50px;height:11.70px;border:1px solid #5a5a5a;border-radius:1.5px;background:#f4f4f4;box-shadow:inset 0 0 0 1px #fff"></div>
<svg style="left:898.70px;top:272.50px" width="12" height="12"><rect x="2.9" y="2.9" width="5.8" height="6" fill="none" stroke="#222" stroke-width="0.9"/><path d="M2.9 3.5 H8.7" stroke="#222" stroke-width="1.3"/></svg>
<div style="left:911.90px;top:272.50px;width:11.50px;height:11.70px;border:1px solid #5a5a5a;border-radius:1.5px;background:#f4f4f4;box-shadow:inset 0 0 0 1px #fff"></div>
<svg style="left:911.90px;top:272.50px" width="12" height="12"><path d="M3 3 L8.6 8.6 M8.6 3 L3 8.6" stroke="#111" stroke-width="1.4"/></svg>
<div style="left:199.20px;top:288.80px;width:36.30px;height:16.70px;background:#f0f0f0;border-left:1px solid #fff;border-top:1px solid #fff;border-right:1px solid #a8a8a8;"></div>
<div class="t" style="left:-82.65px;top:287.10px;width:600px;text-align:center;font-size:9.44px;color:#111;transform:scaleX(0.9009);transform-origin:50% 50%;">Bridge</div>
<div style="left:235.60px;top:290.20px;width:26.80px;height:14.80px;background:#dadada;border-right:1px solid #c2c2c2;border-top:1px solid #e6e6e6;border-left:1px solid #e6e6e6"></div>
<div class="t" style="left:-51.00px;top:288.60px;width:600px;text-align:center;font-size:9.44px;color:#111;transform:scaleX(0.9009);transform-origin:50% 50%;">Ports</div>
<div style="left:263.40px;top:290.20px;width:29.90px;height:14.80px;background:#dadada;border-right:1px solid #c2c2c2;border-top:1px solid #e6e6e6;border-left:1px solid #e6e6e6"></div>
<div class="t" style="left:-21.65px;top:288.60px;width:600px;text-align:center;font-size:9.44px;color:#111;transform:scaleX(0.9009);transform-origin:50% 50%;">Filters</div>
<div style="left:294.20px;top:290.20px;width:27.30px;height:14.80px;background:#dadada;border-right:1px solid #c2c2c2;border-top:1px solid #e6e6e6;border-left:1px solid #e6e6e6"></div>
<div class="t" style="left:7.85px;top:288.60px;width:600px;text-align:center;font-size:9.44px;color:#111;transform:scaleX(0.9009);transform-origin:50% 50%;">NAT</div>
<div style="left:322.30px;top:290.20px;width:30.50px;height:14.80px;background:#dadada;border-right:1px solid #c2c2c2;border-top:1px solid #e6e6e6;border-left:1px solid #e6e6e6"></div>
<div class="t" style="left:37.55px;top:288.60px;width:600px;text-align:center;font-size:9.44px;color:#111;transform:scaleX(0.9009);transform-origin:50% 50%;">Hosts</div>
<div style="left:198.60px;top:304.60px;width:728.00px;height:1.00px;background:#fafafa"></div>
<div style="left:922.80px;top:305.00px;width:1.00px;height:255.00px;background:#a8a8a8"></div>
<div style="left:198.20px;top:305.00px;width:1.00px;height:255.00px;background:#bdbdbd"></div>
<div style="left:201.00px;top:308.80px;width:17.80px;height:18.00px;border:1px solid #acacac;border-bottom-color:#9c9c9c;border-radius:1.5px;background:#f0f0f0;box-shadow:inset 1px 1px 0 #fff;box-sizing:border-box;"></div>
<svg style="left:204.20px;top:312.00px" width="12" height="12"><path d="M4.5 1.3 H7.2 V4.6 H10.5 V7.3 H7.2 V10.6 H4.5 V7.3 H1.2 V4.6 H4.5 Z" fill="#f00000" stroke="#111" stroke-width="0.9"/></svg>
<div style="left:221.40px;top:308.80px;width:18.40px;height:18.00px;border:1px solid #acacac;border-bottom-color:#9c9c9c;border-radius:1.5px;background:#f0f0f0;box-shadow:inset 1px 1px 0 #fff;box-sizing:border-box;"></div>
<svg style="left:224.60px;top:314.60px" width="12" height="8"><rect x="1.2" y="2.2" width="9.6" height="2.8" rx="0.3" fill="#f6f6f6" stroke="#a4a4a4" stroke-width="0.9"/></svg>
<div style="left:247.20px;top:308.80px;width:18.40px;height:18.00px;border:1px solid #acacac;border-bottom-color:#9c9c9c;border-radius:1.5px;background:#f0f0f0;box-shadow:inset 1px 1px 0 #fff;box-sizing:border-box;"></div>
<svg style="left:250.40px;top:311.80px" width="12" height="12"><path d="M1.5 5.5 L4.5 8.8 L10.5 2" stroke="#b8b8b8" stroke-width="2.4" fill="none"/><path d="M1.5 5.5 L4.5 8.8 L10.5 2" stroke="#f4f4f4" stroke-width="1" fill="none"/></svg>
<div style="left:268.00px;top:308.80px;width:18.00px;height:18.00px;border:1px solid #acacac;border-bottom-color:#9c9c9c;border-radius:1.5px;background:#f0f0f0;box-shadow:inset 1px 1px 0 #fff;box-sizing:border-box;"></div>
<svg style="left:271.20px;top:311.80px" width="12" height="12"><path d="M2 2 L10 10 M10 2 L2 10" stroke="#b8b8b8" stroke-width="2.6" fill="none"/><path d="M2 2 L10 10 M10 2 L2 10" stroke="#f4f4f4" stroke-width="1.1" fill="none"/></svg>
<div style="left:293.50px;top:308.80px;width:18.00px;height:18.00px;border:1px solid #acacac;border-bottom-color:#9c9c9c;border-radius:1.5px;background:#f0f0f0;box-shadow:inset 1px 1px 0 #fff;box-sizing:border-box;"></div>
<svg style="left:296.60px;top:313.20px" width="12" height="10"><path d="M0.8 4.4 L3.3 1.4 H11.4 V8.9 H0.8 Z" fill="#f6f6f6" stroke="#8c8c8c" stroke-width="0.9" stroke-linejoin="round"/><path d="M5.6 4.3 H6.9 M8.3 4.3 H9.6" stroke="#9a9a9a" stroke-width="0.8"/></svg>
<div style="left:319.00px;top:308.80px;width:18.50px;height:18.00px;border:1px solid #acacac;border-bottom-color:#9c9c9c;border-radius:1.5px;background:#f0f0f0;box-shadow:inset 1px 1px 0 #fff;box-sizing:border-box;"></div>
<svg style="left:323.00px;top:313.00px" width="12" height="12"><path d="M0.8 1 H10.8 L7 5.2 V10.5 Q5.8 11.5 4.6 10.5 V5.2 Z" fill="#8aa0d8" stroke="#111" stroke-width="1"/><path d="M1.8 1.6 H9.8" stroke="#c8d4f0" stroke-width="0.8"/></svg>
<div style="left:345.00px;top:308.80px;width:46.50px;height:18.00px;border:1px solid #acacac;border-bottom-color:#9c9c9c;border-radius:1.5px;background:#f0f0f0;box-shadow:inset 1px 1px 0 #fff;box-sizing:border-box;"></div>
<div class="t" style="left:68.25px;top:307.80px;width:600px;text-align:center;font-size:9.44px;color:#000;transform:scaleX(0.9009);transform-origin:50% 50%;">Settings</div>
<div style="left:874.60px;top:310.50px;width:47.40px;height:14.30px;background:#fff;border:1px solid #b4b4b4"></div>
<div class="t" style="left:879.00px;top:307.90px;font-size:10.66px;color:#a0acc4;transform:scaleX(0.9009);transform-origin:0 50%;font-style:italic">Find</div>
<div style="left:201.00px;top:330.30px;width:1.00px;height:212.70px;background:#b0b0b0"></div>
<div style="left:201.50px;top:330.30px;width:720.80px;height:13.60px;background:#f0f0f0;border-top:1px solid #c4c4c4;border-bottom:1px solid #b4b4b4;box-shadow:inset 0 1px 0 #fff"></div>
<div style="left:222.30px;top:331.30px;width:1.00px;height:11.60px;background:#c6c6c6"></div>
<div style="left:223.30px;top:331.30px;width:1.00px;height:11.60px;background:#fff"></div>
<div style="left:302.50px;top:331.30px;width:1.00px;height:11.60px;background:#c6c6c6"></div>
<div style="left:303.50px;top:331.30px;width:1.00px;height:11.60px;background:#fff"></div>
<div class="t" style="left:225.80px;top:328.20px;font-size:9.44px;color:#111;transform:scaleX(0.9009);transform-origin:0 50%;">Name</div>
<div style="left:398.50px;top:331.30px;width:1.00px;height:11.60px;background:#c6c6c6"></div>
<div style="left:399.50px;top:331.30px;width:1.00px;height:11.60px;background:#fff"></div>
<div class="t" style="left:306.00px;top:328.20px;font-size:9.44px;color:#111;transform:scaleX(0.9009);transform-origin:0 50%;">Type</div>
<div style="left:439.00px;top:331.30px;width:1.00px;height:11.60px;background:#c6c6c6"></div>
<div style="left:440.00px;top:331.30px;width:1.00px;height:11.60px;background:#fff"></div>
<div class="t" style="left:402.00px;top:328.20px;font-size:9.44px;color:#111;transform:scaleX(0.9009);transform-origin:0 50%;">L</div>
<div style="left:734.60px;top:331.30px;width:1.00px;height:11.60px;background:#c6c6c6"></div>
<div style="left:735.60px;top:331.30px;width:1.00px;height:11.60px;background:#fff"></div>
<div class="t" style="left:698.10px;top:328.20px;font-size:9.44px;color:#111;transform:scaleX(0.9009);transform-origin:0 50%;">Tx Errors</div>
<div style="left:774.50px;top:331.30px;width:1.00px;height:11.60px;background:#c6c6c6"></div>
<div style="left:775.50px;top:331.30px;width:1.00px;height:11.60px;background:#fff"></div>
<div class="t" style="left:738.10px;top:328.20px;font-size:9.44px;color:#111;transform:scaleX(0.9009);transform-origin:0 50%;">Rx Errors</div>
<div style="left:866.60px;top:331.30px;width:1.00px;height:11.60px;background:#c6c6c6"></div>
<div style="left:867.60px;top:331.30px;width:1.00px;height:11.60px;background:#fff"></div>
<div class="t" style="left:778.00px;top:328.20px;font-size:9.44px;color:#111;transform:scaleX(0.9009);transform-origin:0 50%;">MAC Address</div>
<div style="left:906.90px;top:331.30px;width:1.00px;height:11.60px;background:#c6c6c6"></div>
<div style="left:907.90px;top:331.30px;width:1.00px;height:11.60px;background:#fff"></div>
<div class="t" style="left:870.10px;top:328.20px;font-size:9.44px;color:#111;transform:scaleX(0.9009);transform-origin:0 50%;">Protoco...</div>
<div style="left:201.50px;top:343.90px;width:720.80px;height:199.10px;background:#fff"></div>
<div style="left:201.50px;top:354.90px;width:720.80px;height:1.00px;background:#e6e6e6"></div>
<div class="t" style="left:203.10px;top:339.90px;font-size:9.44px;color:#111;transform:scaleX(0.9009);transform-origin:0 50%;">R</div>
<svg style="left:225.50px;top:344.90px" width="13" height="10"><path d="M1.3 6.7 H10.7" stroke="#b01818" stroke-width="1.4"/><path d="M1 6.7 H3.4 M8.6 6.7 H11" stroke="#880000" stroke-width="1.6"/><path d="M2.45 3 V6.2 M9.5 3 V6.2" stroke="#555" stroke-width="0.9"/><path d="M2.45 0.1 V3.6 M9.5 0.1 V3.6" stroke="#000" stroke-width="1.2"/><path d="M2.45 1 Q6 5.6 9.5 1" stroke="#1a1a1a" stroke-width="1.2" fill="none"/><path d="M2.45 1.4 L0.7 4.6 M9.5 1.4 L11.3 4.6" stroke="#444" stroke-width="0.7"/><circle cx="0.7" cy="4.6" r="0.8" fill="#333"/><circle cx="11.3" cy="4.6" r="0.8" fill="#333"/></svg>
<div class="t" style="left:238.00px;top:339.90px;font-size:9.44px;color:#111;transform:scaleX(0.9009);transform-origin:0 50%;">bridge_local</div>
<div class="t" style="left:306.00px;top:339.90px;font-size:9.44px;color:#111;transform:scaleX(0.9009);transform-origin:0 50%;">Bridge</div>
<div class="t" style="left:433.40px;top:339.90px;width:300px;text-align:right;font-size:9.44px;color:#111;transform:scaleX(0.9009);transform-origin:100% 50%;">0</div>
<div class="t" style="left:473.30px;top:339.90px;width:300px;text-align:right;font-size:9.44px;color:#111;transform:scaleX(0.9009);transform-origin:100% 50%;">0</div>
<div class="t" style="left:778.00px;top:339.90px;font-size:9.44px;color:#111;transform:scaleX(0.9009);transform-origin:0 50%;">D4:CA:6D:7E:F8:CA</div>
<div class="t" style="left:870.10px;top:339.90px;font-size:9.44px;color:#111;transform:scaleX(0.9009);transform-origin:0 50%;">none</div>
<div style="left:222.80px;top:343.90px;width:1.00px;height:12.00px;background:#e6e6e6"></div>
<div style="left:303.00px;top:343.90px;width:1.00px;height:12.00px;background:#e6e6e6"></div>
<div style="left:399.00px;top:343.90px;width:1.00px;height:12.00px;background:#e6e6e6"></div>
<div style="left:439.50px;top:343.90px;width:1.00px;height:12.00px;background:#e6e6e6"></div>
<div style="left:735.10px;top:343.90px;width:1.00px;height:12.00px;background:#e6e6e6"></div>
<div style="left:775.00px;top:343.90px;width:1.00px;height:12.00px;background:#e6e6e6"></div>
<div style="left:867.10px;top:343.90px;width:1.00px;height:12.00px;background:#e6e6e6"></div>
<div style="left:907.40px;top:343.90px;width:1.00px;height:12.00px;background:#e6e6e6"></div>
<div style="left:907.90px;top:331.00px;width:1.00px;height:12.00px;background:#d0d0d0"></div>
<svg style="left:910.5px;top:334px" width="10" height="6"><path d="M0.5 0.5 H9 L4.75 5 Z" fill="#111"/></svg>
<svg style="left:294.7px;top:333px" width="7" height="8"><path d="M1.4 6.6 L3.5 2.9" stroke="#6a6a6a" stroke-width="1"/><path d="M3.9 2.9 L5.6 6.4" stroke="#fff" stroke-width="0.9"/></svg>
<div style="left:201.50px;top:542.60px;width:721.30px;height:1.00px;background:#a8a8a8"></div>
<div class="t" style="left:203.50px;top:541.30px;font-size:9.44px;color:#111;transform:scaleX(0.9009);transform-origin:0 50%;">1 item out of 8</div>
<div style="left:199.20px;top:558.50px;width:727.40px;height:1.00px;background:#fafafa"></div>
<div style="left:404.00px;top:252.10px;width:315.80px;height:343.10px;background:#f0f0f0;border:1.2px solid #1e1e1e"></div>
<div style="left:405.20px;top:253.30px;width:313.40px;height:16.50px;background:#4c4cca"></div>
<div style="left:405.20px;top:253.30px;width:313.40px;height:1.00px;background:#5a5ad0"></div>
<div style="left:405.20px;top:269.60px;width:313.40px;height:1.00px;background:#c8c8ee"></div>
<div class="t" style="left:409.10px;top:253.10px;font-size:9.44px;color:#ececf8;transform:scaleX(0.9009);transform-origin:0 50%;">New Interface</div>
<div style="left:690.40px;top:256.30px;width:11.50px;height:11.70px;border:1px solid #5a5a5a;border-radius:1.5px;background:#f4f4f4;box-shadow:inset 0 0 0 1px #fff"></div>
<svg style="left:690.40px;top:256.30px" width="12" height="12"><rect x="2.9" y="2.9" width="5.8" height="6" fill="none" stroke="#222" stroke-width="0.9"/><path d="M2.9 3.5 H8.7" stroke="#222" stroke-width="1.3"/></svg>
<div style="left:703.60px;top:256.30px;width:11.50px;height:11.70px;border:1px solid #5a5a5a;border-radius:1.5px;background:#f4f4f4;box-shadow:inset 0 0 0 1px #fff"></div>
<svg style="left:703.60px;top:256.30px" width="12" height="12"><path d="M3 3 L8.6 8.6 M8.6 3 L3 8.6" stroke="#111" stroke-width="1.4"/></svg>
<div style="left:409.10px;top:274.00px;width:36.20px;height:15.20px;background:#dadada;border-right:1px solid #c2c2c2;border-top:1px solid #e6e6e6;border-left:1px solid #e6e6e6"></div>
<div class="t" style="left:127.20px;top:272.60px;width:600px;text-align:center;font-size:9.44px;color:#111;transform:scaleX(0.9009);transform-origin:50% 50%;">General</div>
<div style="left:445.30px;top:272.00px;width:28.90px;height:17.70px;background:#f0f0f0;border-left:1px solid #fff;border-top:1px solid #fff;border-right:1px solid #a8a8a8;"></div>
<div class="t" style="left:159.75px;top:270.80px;width:600px;text-align:center;font-size:9.44px;color:#111;transform:scaleX(0.9009);transform-origin:50% 50%;">STP</div>
<div style="left:475.20px;top:274.00px;width:31.40px;height:15.20px;background:#dadada;border-right:1px solid #c2c2c2;border-top:1px solid #e6e6e6;border-left:1px solid #e6e6e6"></div>
<div class="t" style="left:190.90px;top:272.60px;width:600px;text-align:center;font-size:9.44px;color:#111;transform:scaleX(0.9009);transform-origin:50% 50%;">Status</div>
<div style="left:507.60px;top:274.00px;width:33.00px;height:15.20px;background:#dadada;border-right:1px solid #c2c2c2;border-top:1px solid #e6e6e6;border-left:1px solid #e6e6e6"></div>
<div class="t" style="left:224.10px;top:272.60px;width:600px;text-align:center;font-size:9.44px;color:#111;transform:scaleX(0.9009);transform-origin:50% 50%;">Traffic</div>
<div style="left:405.20px;top:288.80px;width:250.00px;height:284.80px;border-right:1px solid #a8a8a8;border-bottom:1px solid #a8a8a8;border-left:1px solid #fff;border-top:1px solid #fafafa"></div>
<div class="t" style="left:191.40px;top:291.80px;width:300px;text-align:right;font-size:9.44px;color:#1a1ad8;transform:scaleX(0.9009);transform-origin:100% 50%;">Protocol Mode:</div>
<svg style="left:497.20px;top:296.20px" width="10" height="10"><circle cx="4.5" cy="4.5" r="3.7" fill="#f8f8f8" stroke="#e2e2e2" stroke-width="0.8"/><path d="M1.9 7 A3.7 3.7 0 0 1 7.3 1.9" stroke="#333" stroke-width="1.25" fill="none"/></svg>
<div class="t" style="left:510.60px;top:291.90px;font-size:9.44px;color:#111;transform:scaleX(0.9009);transform-origin:0 50%;">none</div>
<svg style="left:584.10px;top:296.40px" width="10" height="10"><circle cx="4.5" cy="4.5" r="3.7" fill="#f8f8f8" stroke="#e2e2e2" stroke-width="0.8"/><path d="M1.9 7 A3.7 3.7 0 0 1 7.3 1.9" stroke="#333" stroke-width="1.25" fill="none"/></svg>
<div class="t" style="left:597.40px;top:291.90px;font-size:9.44px;color:#111;transform:scaleX(0.9009);transform-origin:0 50%;">stp</div>
<svg style="left:619.30px;top:296.40px" width="10" height="10"><circle cx="4.5" cy="4.5" r="3.7" fill="#f8f8f8" stroke="#e2e2e2" stroke-width="0.8"/><path d="M1.9 7 A3.7 3.7 0 0 1 7.3 1.9" stroke="#333" stroke-width="1.25" fill="none"/><circle cx="4.5" cy="4.5" r="1.55" fill="#111"/></svg>
<div class="t" style="left:632.50px;top:291.90px;font-size:9.44px;color:#111;transform:scaleX(0.9009);transform-origin:0 50%;">rstp</div>
<div style="left:632.00px;top:296.00px;width:16.80px;height:10.60px;border:1px solid #b0b0b0"></div>
<div class="t" style="left:191.40px;top:308.50px;width:300px;text-align:right;font-size:9.44px;color:#111;transform:scaleX(0.9009);transform-origin:100% 50%;">Priority:</div>
<div style="left:496.90px;top:311.30px;width:132.60px;height:14.00px;background:#fff;border:1px solid #b4b4b4;border-top-color:#a0a0a0;border-left-color:#a0a0a0"></div>
<div class="t" style="left:499.10px;top:308.50px;font-size:9.44px;color:#111;transform:scaleX(0.9009);transform-origin:0 50%;">8000</div>
<div class="t" style="left:632.00px;top:308.50px;font-size:9.44px;color:#111;transform:scaleX(0.9009);transform-origin:0 50%;">hex</div>
<div style="left:413.00px;top:332.70px;width:234.80px;height:1.00px;background:#dadada"></div>
<div style="left:413.00px;top:333.70px;width:234.80px;height:1.00px;background:#fafafa"></div>
<div class="t" style="left:191.40px;top:336.60px;width:300px;text-align:right;font-size:9.44px;color:#111;transform:scaleX(0.9009);transform-origin:100% 50%;">Max Message Age:</div>
<div style="left:496.90px;top:339.40px;width:150.90px;height:14.00px;background:#fff;border:1px solid #b4b4b4;border-top-color:#a0a0a0;border-left-color:#a0a0a0"></div>
<div class="t" style="left:499.10px;top:336.60px;font-size:9.44px;color:#111;transform:scaleX(0.9009);transform-origin:0 50%;">00:00:20</div>
<div class="t" style="left:191.40px;top:356.55px;width:300px;text-align:right;font-size:9.44px;color:#111;transform:scaleX(0.9009);transform-origin:100% 50%;">Forward Delay:</div>
<div style="left:496.90px;top:359.35px;width:150.90px;height:14.00px;background:#fff;border:1px solid #b4b4b4;border-top-color:#a0a0a0;border-left-color:#a0a0a0"></div>
<div class="t" style="left:499.10px;top:356.55px;font-size:9.44px;color:#111;transform:scaleX(0.9009);transform-origin:0 50%;">00:00:15</div>
<div class="t" style="left:191.40px;top:376.50px;width:300px;text-align:right;font-size:9.44px;color:#111;transform:scaleX(0.9009);transform-origin:100% 50%;">Transmit Hold Count:</div>
<div style="left:496.90px;top:379.30px;width:150.90px;height:14.00px;background:#fff;border:1px solid #b4b4b4;border-top-color:#a0a0a0;border-left-color:#a0a0a0"></div>
<div class="t" style="left:499.10px;top:376.50px;font-size:9.44px;color:#111;transform:scaleX(0.9009);transform-origin:0 50%;">6</div>
<div class="t" style="left:191.40px;top:396.45px;width:300px;text-align:right;font-size:9.44px;color:#111;transform:scaleX(0.9009);transform-origin:100% 50%;">Ageing Time:</div>
<div style="left:496.90px;top:399.25px;width:150.90px;height:14.00px;background:#fff;border:1px solid #b4b4b4;border-top-color:#a0a0a0;border-left-color:#a0a0a0"></div>
<div class="t" style="left:499.10px;top:396.45px;font-size:9.44px;color:#111;transform:scaleX(0.9009);transform-origin:0 50%;">00:05:00</div>
<div style="left:663.20px;top:274.10px;width:50.40px;height:18.50px;border:1px solid #3c3c3c;border-bottom-color:#3c3c3c;border-radius:1.5px;background:#f0f0f0;box-shadow:inset 1px 1px 0 #fff;box-sizing:border-box;"></div>
<div class="t" style="left:388.40px;top:273.35px;width:600px;text-align:center;font-size:9.44px;color:#000;transform:scaleX(0.9009);transform-origin:50% 50%;">OK</div>
<div style="left:663.20px;top:295.70px;width:50.40px;height:17.60px;border:1px solid #acacac;border-bottom-color:#9c9c9c;border-radius:1.5px;background:#f0f0f0;box-shadow:inset 1px 1px 0 #fff;box-sizing:border-box;"></div>
<div class="t" style="left:388.40px;top:294.50px;width:600px;text-align:center;font-size:9.44px;color:#000;transform:scaleX(0.9009);transform-origin:50% 50%;">Cancel</div>
<div style="left:663.20px;top:316.30px;width:50.40px;height:17.70px;border:1px solid #acacac;border-bottom-color:#9c9c9c;border-radius:1.5px;background:#f0f0f0;box-shadow:inset 1px 1px 0 #fff;box-sizing:border-box;"></div>
<div class="t" style="left:388.40px;top:315.15px;width:600px;text-align:center;font-size:9.44px;color:#000;transform:scaleX(0.9009);transform-origin:50% 50%;">Apply</div>
<div style="left:663.20px;top:341.70px;width:50.40px;height:17.70px;border:1px solid #acacac;border-bottom-color:#9c9c9c;border-radius:1.5px;background:#f0f0f0;box-shadow:inset 1px 1px 0 #fff;box-sizing:border-box;"></div>
<div class="t" style="left:388.40px;top:340.55px;width:600px;text-align:center;font-size:9.44px;color:#000;transform:scaleX(0.9009);transform-origin:50% 50%;">Disable</div>
<div style="left:663.20px;top:362.30px;width:50.40px;height:18.00px;border:1px solid #acacac;border-bottom-color:#9c9c9c;border-radius:1.5px;background:#f0f0f0;box-shadow:inset 1px 1px 0 #fff;box-sizing:border-box;"></div>
<div class="t" style="left:388.40px;top:361.30px;width:600px;text-align:center;font-size:9.44px;color:#000;transform:scaleX(0.9009);transform-origin:50% 50%;">Comment</div>
<div style="left:663.20px;top:383.10px;width:50.40px;height:18.00px;border:1px solid #acacac;border-bottom-color:#9c9c9c;border-radius:1.5px;background:#f0f0f0;box-shadow:inset 1px 1px 0 #fff;box-sizing:border-box;"></div>
<div class="t" style="left:388.40px;top:382.10px;width:600px;text-align:center;font-size:9.44px;color:#000;transform:scaleX(0.9009);transform-origin:50% 50%;">Copy</div>
<div style="left:663.20px;top:404.20px;width:50.40px;height:17.70px;border:1px solid #acacac;border-bottom-color:#9c9c9c;border-radius:1.5px;background:#f0f0f0;box-shadow:inset 1px 1px 0 #fff;box-sizing:border-box;"></div>
<div class="t" style="left:388.40px;top:403.05px;width:600px;text-align:center;font-size:9.44px;color:#000;transform:scaleX(0.9009);transform-origin:50% 50%;">Remove</div>
<div style="left:663.20px;top:429.50px;width:50.40px;height:17.70px;border:1px solid #acacac;border-bottom-color:#9c9c9c;border-radius:1.5px;background:#f0f0f0;box-shadow:inset 1px 1px 0 #fff;box-sizing:border-box;"></div>
<div class="t" style="left:388.40px;top:428.35px;width:600px;text-align:center;font-size:9.44px;color:#000;transform:scaleX(0.9009);transform-origin:50% 50%;">Torch</div>
<div style="left:406.50px;top:576.00px;width:99.80px;height:15.30px;border-top:1px solid #a8a8a8;border-left:1px solid #a8a8a8;border-right:1px solid #fff;border-bottom:1px solid #fff"></div>
<div class="t" style="left:408.90px;top:574.00px;font-size:9.44px;color:#111;transform:scaleX(0.9009);transform-origin:0 50%;">enabled</div>
<div style="left:508.90px;top:576.00px;width:100.30px;height:15.30px;border-top:1px solid #a8a8a8;border-left:1px solid #a8a8a8;border-right:1px solid #fff;border-bottom:1px solid #fff"></div>
<div class="t" style="left:511.30px;top:574.00px;font-size:9.44px;color:#b4b4b4;transform:scaleX(0.9009);transform-origin:0 50%;">running</div>
<div style="left:611.60px;top:576.00px;width:104.00px;height:15.30px;border-top:1px solid #a8a8a8;border-left:1px solid #a8a8a8;border-right:1px solid #fff;border-bottom:1px solid #fff"></div>
<div class="t" style="left:614.00px;top:574.00px;font-size:9.44px;color:#b4b4b4;transform:scaleX(0.9009);transform-origin:0 50%;">slave</div>
</body></html>
